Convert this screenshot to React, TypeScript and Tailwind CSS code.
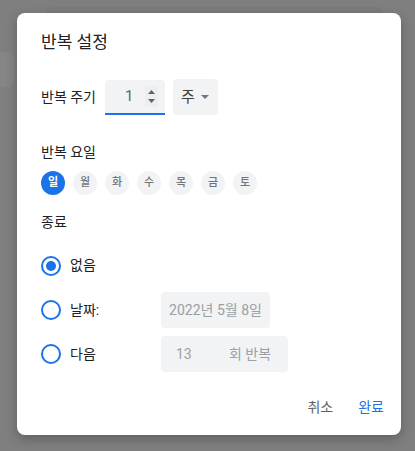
import * as React from 'react';

const days = ['일', '월', '화', '수', '목', '금', '토'];

function Radio({ checked }: { checked?: boolean }) {
    return (
        <span className="flex h-5 w-5 items-center justify-center rounded-full border-2 border-[#1a73e8]">
            {checked && <span className="h-[10px] w-[10px] rounded-full bg-[#1a73e8]" />}
        </span>
    );
}

export default function App() {
    return (
        <div
            className="relative h-[451px] w-[415px] overflow-hidden bg-[#7f7f7f]"
            style={{ fontFamily: 'Roboto, "Noto Sans CJK KR", sans-serif' }}
        >
            {/* page behind the overlay */}
            <div className="ml-[46px] mt-[7px] h-[8px] w-[336px] rounded-t-[6px] bg-[#7b7b7b]" />
            <div className="mt-[37px] h-[35px] w-[14px] rounded-r-[6px] bg-[#858585]" />

            {/* dialog */}
            <div className="absolute left-[17px] top-[13px] flex h-[422px] w-[384px] flex-col rounded-[8px] bg-white pl-[24px] pr-[17px] text-[#202124] shadow-[0_4px_12px_rgba(0,0,0,0.25)]">
                <h2 className="mt-[18px] text-[17px] leading-[22px]">반복 설정</h2>

                <div className="mt-[26px] flex items-center">
                    <span className="text-[14px]">반복 주기</span>
                    <div className="ml-[9px] flex h-[35px] w-[60px] items-center rounded-t-[4px] border-b-2 border-[#1a73e8] bg-[#f1f3f4]">
                        <span className="ml-[20px] text-[15px] text-[#5f6368]">1</span>
                        <span className="ml-[12px] flex h-[21px] w-[13px] flex-col items-center justify-between bg-[#eceeef] py-[4px]">
                            <svg width="7" height="4" viewBox="0 0 7 4">
                                <path d="M0 4 L3.5 0 L7 4 Z" fill="#5f6368" />
                            </svg>
                            <svg width="7" height="4" viewBox="0 0 7 4">
                                <path d="M0 0 L3.5 4 L7 0 Z" fill="#5f6368" />
                            </svg>
                        </span>
                    </div>
                    <div className="ml-[8px] flex h-[36px] w-[45px] items-center rounded-[4px] bg-[#f1f3f4] pl-[8px]">
                        <span className="text-[15px] text-[#3c4043]">주</span>
                        <svg className="ml-[6px]" width="8" height="4" viewBox="0 0 8 4">
                            <path d="M0 0 L4 4 L8 0 Z" fill="#70757a" />
                        </svg>
                    </div>
                </div>

                <div className="mt-[27px] text-[14px] leading-[20px]">반복 요일</div>
                <div className="mt-[9px] flex gap-[8px]">
                    {days.map((d, i) => (
                        <span
                            key={d}
                            className={
                                i === 0
                                    ? 'flex h-6 w-6 items-center justify-center rounded-full bg-[#1a73e8] text-[11px] font-bold text-white'
                                    : 'flex h-6 w-6 items-center justify-center rounded-full bg-[#f1f3f4] text-[11px] font-medium text-[#70757a]'
                            }
                        >
                            {d}
                        </span>
                    ))}
                </div>

                <div className="mt-[17px] text-[14px] leading-[20px]">종료</div>

                <div className="mt-[23px] flex items-center">
                    <Radio checked />
                    <span className="ml-[9px] text-[14px]">없음</span>
                </div>

                <div className="mt-[16px] flex items-center">
                    <Radio />
                    <span className="ml-[9px] w-[91px] text-[14px]">날짜:</span>
                    <div className="flex h-[36px] w-[109px] items-center justify-center rounded-[4px] bg-[#f1f3f4] text-[14px] text-[#9aa0a6]">
                        2022년 5월 8일
                    </div>
                </div>

                <div className="mt-[8px] flex items-center">
                    <Radio />
                    <span className="ml-[9px] w-[91px] text-[14px]">다음</span>
                    <div className="flex h-[36px] w-[127px] items-center rounded-[4px] bg-[#f1f3f4] text-[14px] text-[#9aa0a6]">
                        <span className="ml-[15px] w-[53px]">13</span>
                        <span>회 반복</span>
                    </div>
                </div>

                <div className="mt-auto mb-[18px] flex justify-end gap-[25px] text-[14px] leading-[20px]">
                    <button className="text-[#5f6368]">취소</button>
                    <button className="text-[#1a73e8]">완료</button>
                </div>
            </div>
        </div>
    );
}
